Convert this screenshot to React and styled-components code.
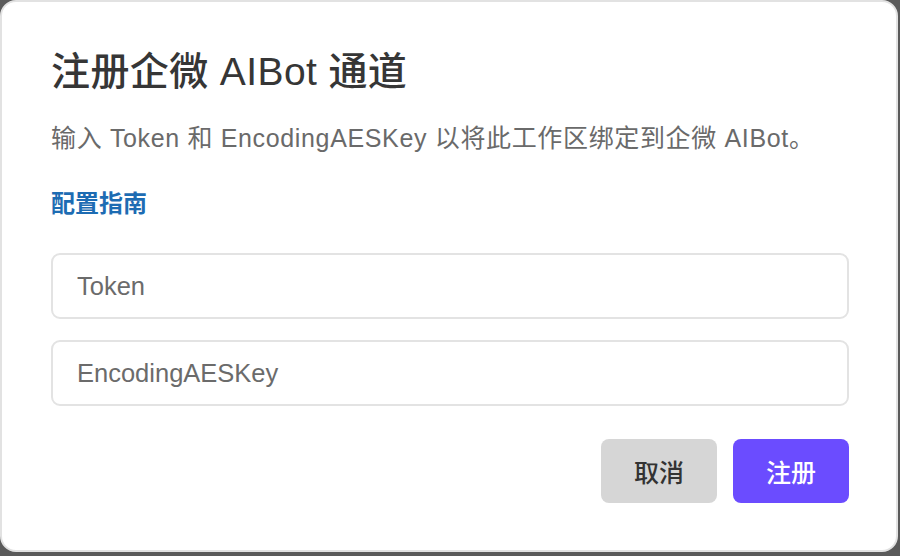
import React from "react";
import styled, { createGlobalStyle } from "styled-components";

const GlobalStyle = createGlobalStyle`
  html, body {
    margin: 0;
    padding: 0;
    background: #5a5a5a;
    width: 900px;
    height: 556px;
    overflow: hidden;
  }
  * { box-sizing: border-box; }
`;

const FONT = `"Liberation Sans", "Noto Sans CJK SC", sans-serif`;

const Dialog = styled.div`
  width: 898px;
  height: 552px;
  background: #ffffff;
  border: 2px solid #e2e2e2;
  border-radius: 16px;
  padding: 46px 47px 0 49px;
  display: flex;
  flex-direction: column;
  font-family: ${FONT};
`;

const Title = styled.h1`
  margin: 0;
  font-size: 39px;
  line-height: 48px;
  font-weight: 500;
  letter-spacing: 0.4px;
  color: #363636;
`;

const Description = styled.p`
  margin: 26px 0 0;
  font-size: 25px;
  line-height: 32px;
  letter-spacing: 0.65px;
  color: #6a6a6a;
`;

const GuideLink = styled.a`
  margin-top: 34px;
  align-self: flex-start;
  font-size: 24px;
  line-height: 32px;
  font-weight: 600;
  color: #1d6cb3;
  text-decoration: none;
  cursor: pointer;
`;

const Fields = styled.div`
  margin-top: 33px;
  display: flex;
  flex-direction: column;
  gap: 21px;
`;

const Input = styled.input`
  width: 100%;
  height: 66px;
  padding: 0 24px;
  border: 2px solid #e3e3e3;
  border-radius: 9px;
  font-family: ${FONT};
  font-size: 25.5px;
  color: #333;
  outline: none;
  background: #fff;
  &::placeholder {
    color: #6b6b6b;
  }
`;

const Actions = styled.div`
  margin-top: 33px;
  display: flex;
  justify-content: flex-end;
  gap: 16px;
`;

const Button = styled.button`
  width: 116px;
  height: 64px;
  border: none;
  border-radius: 8px;
  font-family: ${FONT};
  font-size: 25px;
  font-weight: 500;
  cursor: pointer;
  background: ${(p) => (p.$primary ? "#6b4cff" : "#d6d6d6")};
  color: ${(p) => (p.$primary ? "#ffffff" : "#333333")};
`;

export default function App() {
  return (
    <>
      <GlobalStyle />
      <Dialog>
        <Title>注册企微 AIBot 通道</Title>
        <Description>
          输入 Token 和 EncodingAESKey 以将此工作区绑定到企微 AIBot。
        </Description>
        <GuideLink>配置指南</GuideLink>
        <Fields>
          <Input placeholder="Token" />
          <Input placeholder="EncodingAESKey" />
        </Fields>
        <Actions>
          <Button>取消</Button>
          <Button $primary>注册</Button>
        </Actions>
      </Dialog>
    </>
  );
}
